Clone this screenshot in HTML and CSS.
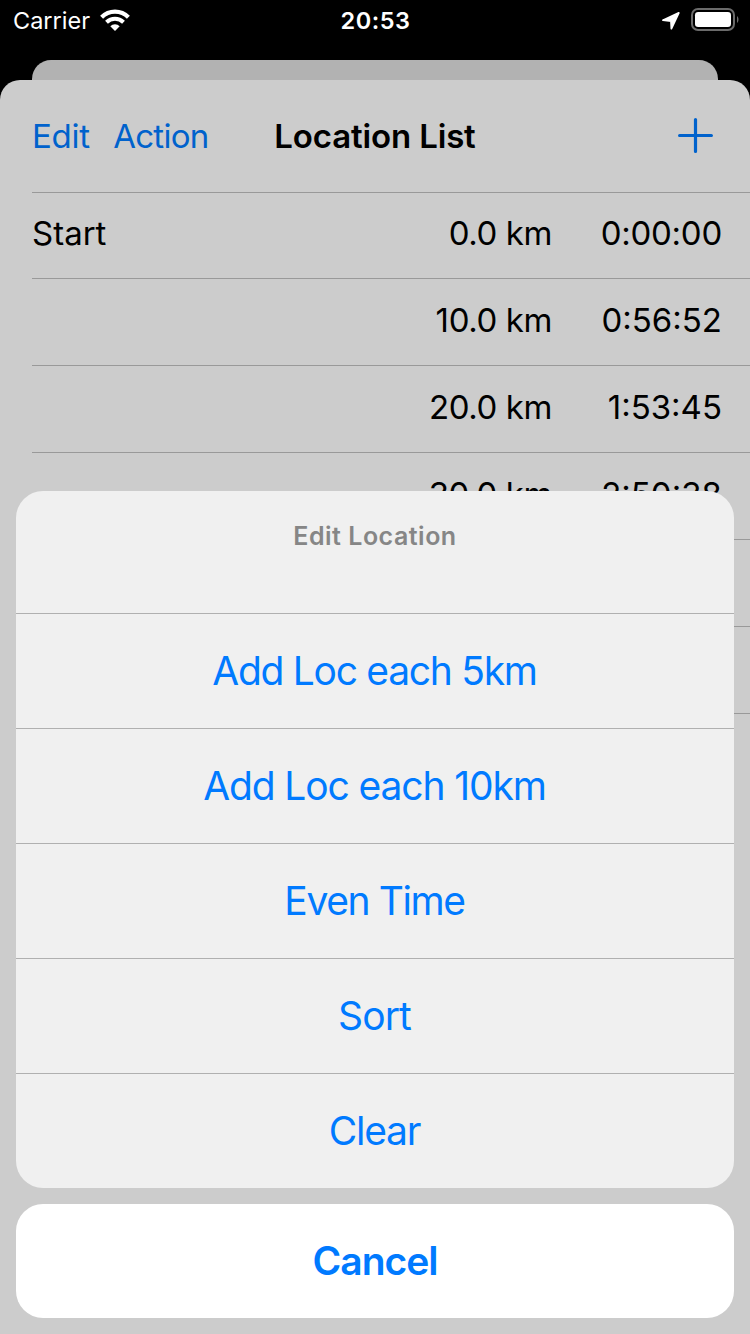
FILE: index.html
```html
<!DOCTYPE html>
<html lang="en">
<head>
<meta charset="utf-8">
<title>Location List</title>
<link rel="stylesheet" href="styles.css">
</head>
<body>
<div class="screen">
  <header class="status">
    <div class="status-left">
      <span class="carrier">Carrier</span>
      <svg class="wifi" width="30" height="22" viewBox="0 0 30 22" fill="none" stroke="#fff">
        <path d="M1.6 8.2A19 19 0 0 1 28.4 8.2" stroke-width="4.2"/>
        <path d="M6.5 13.3A12.2 12.2 0 0 1 23.5 13.3" stroke-width="4"/>
        <path d="M15 22 10.3 17.3A6.7 6.7 0 0 1 19.7 17.3Z" fill="#fff" stroke="none"/>
      </svg>
    </div>
    <span class="clock">20:53</span>
    <div class="status-right">
      <svg class="arrow" width="20" height="20" viewBox="0 0 20 20" fill="#fff" stroke="#fff" stroke-width="1.8" stroke-linejoin="round"><path d="M17.8 1.9 10.4 17.6 10 10 1.9 9.2Z"/></svg>
      <svg class="battery" width="48" height="24" viewBox="0 0 48 24">
        <rect x="1" y="1" width="42" height="21" rx="6" fill="none" stroke="#6b6b6b" stroke-width="2"/>
        <rect x="4" y="4" width="36" height="15" rx="3.2" fill="#fff"/>
        <path d="M46 8C48 9.5 48 13.5 46 15Z" fill="#6b6b6b"/>
      </svg>
    </div>
  </header>
  <div class="behind"></div>
  <main class="page">
    <nav class="bar">
      <div class="bar-left"><a class="edit">Edit</a><a class="action">Action</a></div>
      <h1 class="title">Location List</h1>
      <svg class="plus" width="35" height="35" viewBox="0 0 35 35" stroke="#0062cc" stroke-width="3.2" stroke-linecap="round"><path d="M17.5 1.6V33.4M1.6 17.5H33.4"/></svg>
    </nav>
    <ul class="list">
      <li class="row first"><span class="name">Start</span><span class="dist">0.0 km</span><span class="time">0:00:00</span></li>
      <li class="row"><span class="name"></span><span class="dist">10.0 km</span><span class="time">0:56:52</span></li>
      <li class="row"><span class="name"></span><span class="dist">20.0 km</span><span class="time">1:53:45</span></li>
      <li class="row"><span class="name"></span><span class="dist">30.0 km</span><span class="time">2:50:38</span></li>
      <li class="row"></li>
      <li class="row"></li>
    </ul>
  </main>
  <div class="sheet">
    <div class="group">
      <div class="caption">Edit Location</div>
      <div class="option add-five">Add Loc each 5km</div>
      <div class="option add-ten">Add Loc each 10km</div>
      <div class="option even">Even Time</div>
      <div class="option sort">Sort</div>
      <div class="option clear">Clear</div>
    </div>
    <div class="cancel">Cancel</div>
  </div>
</div>
</body>
</html>
```
FILE: styles.css
```css
* { box-sizing: border-box; }
body { margin: 0; background: #000; }
.screen {
  position: relative;
  width: 750px;
  height: 1334px;
  overflow: hidden;
  display: flex;
  flex-direction: column;
  background: #000;
  color: #000;
  font-family: Inter, "Liberation Sans", sans-serif;
  font-size: 33px;
  white-space: nowrap;
}
.status {
  height: 60px;
  flex: none;
  display: grid;
  grid-template-columns: 1fr auto 1fr;
  align-items: start;
  padding: 6px 11px 0 13px;
  color: #fff;
  font-size: 23.5px;
  line-height: 30px;
}
.status-left, .status-right { display: flex; }
.status-right { justify-content: flex-end; }
.carrier { letter-spacing: 0; }
.wifi { margin: 3px 0 0 10px; }
.clock { font-weight: 600; letter-spacing: 0.5px; padding-right: 1px; }
.arrow { margin: 5px 10px 0 0; }
.battery { margin: 2px 0 0; }
.behind {
  flex: none;
  height: 20px;
  margin: 0 32px;
  background: #b2b2b2;
  border-radius: 19px 19px 0 0;
}
.page {
  flex: 1;
  background: #ccc;
  border-radius: 20px 20px 0 0;
}
.bar {
  height: 112px;
  display: grid;
  grid-template-columns: 1fr auto 1fr;
  align-items: center;
  padding: 0 32px;
}
.bar-left { display: flex; gap: 23.5px; color: #0062cc; }
.edit { letter-spacing: -0.3px; }
.action { letter-spacing: -0.7px; }
.title { margin: 0; font-size: 33px; font-weight: 600; letter-spacing: -0.15px; }
.plus { justify-self: end; margin: 0 5px 1px 0; }
.list { list-style: none; margin: 0 0 0 32px; padding: 0; border-top: 1px solid #999; }
.row {
  height: 87px;
  display: grid;
  grid-template-columns: 1fr auto 170px;
  align-items: center;
  padding: 0 28px 4px 0;
  border-bottom: 1px solid #999;
}
.first { height: 86px; padding-bottom: 5px; }
.dist { letter-spacing: -0.4px; }
.time { text-align: right; }
.first .time { letter-spacing: -0.25px; }
.sheet {
  position: absolute;
  left: 16px;
  right: 16px;
  bottom: 16px;
  display: flex;
  flex-direction: column;
  gap: 16px;
  color: #007aff;
  font-size: 39px;
}
.group { border-radius: 27px; overflow: hidden; background: #f0f0f0; }
.caption {
  height: 122px;
  padding-top: 30px;
  text-align: center;
  font-size: 25px;
  line-height: 30px;
  font-weight: 600;
  letter-spacing: 0.5px;
  color: #868686;
}
.option {
  height: 115px;
  padding: 0 1px 1px 0;
  border-top: 1px solid #b0b0b0;
  display: flex;
  align-items: center;
  justify-content: center;
}
.add-five { letter-spacing: -1.28px; }
.add-ten { letter-spacing: -1.12px; }
.even { letter-spacing: -1.4px; }
.sort { letter-spacing: -0.9px; }
.clear { letter-spacing: -1.2px; }
.cancel {
  height: 114px;
  padding: 0 0 2px;
  border-radius: 27px;
  background: #fff;
  display: flex;
  align-items: center;
  justify-content: center;
  font-weight: 600;
  letter-spacing: -1px;
}
```
